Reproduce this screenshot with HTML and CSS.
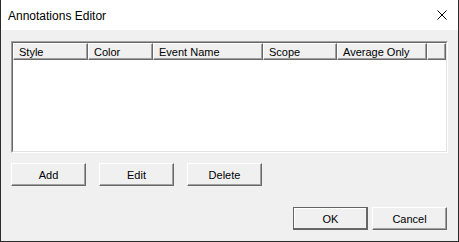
FILE: index.html
```html
<!DOCTYPE html>
<html lang="en">
<head>
    <meta charset="UTF-8">
    <title>Annotations Editor</title>
    <link rel="stylesheet" href="styles.css">
</head>
<body>

    <div class="window">
        <div class="titlebar">
            <span class="title">Annotations Editor</span>
            <svg class="close" width="10" height="10" viewBox="0 0 10 10">
                <path d="M0.5 0.5 L9.5 9.5 M9.5 0.5 L0.5 9.5" stroke="#000" stroke-width="1" fill="none"/>
            </svg>
        </div>

        <div class="client">
            <div class="listview">
                <div class="list-inner">
                    <div class="header">
                        <div class="col col-style">Style</div>
                        <div class="col col-color">Color</div>
                        <div class="col col-event">Event Name</div>
                        <div class="col col-scope">Scope</div>
                        <div class="col col-avg">Average Only</div>
                        <div class="col col-rest"></div>
                    </div>
                </div>
            </div>

            <div class="btn-row">
                <button class="btn">Add</button>
                <button class="btn">Edit</button>
                <button class="btn">Delete</button>
            </div>

            <div class="btn-row dialog-row">
                <button class="btn default">OK</button>
                <button class="btn">Cancel</button>
            </div>
        </div>
    </div>

</body>
</html>
```

FILE: styles.css
```css
body {
    margin: 0;
    padding: 0;
    font-family: 'Liberation Sans', Arial, sans-serif;
    font-size: 11px;
    color: #000;
    background-color: #fff;
}

.window {
    width: 459px;
    height: 242px;
    box-sizing: border-box;
    border: 1px solid #2b2b2b;
    border-top: none;
    display: flex;
    flex-direction: column;
}

.titlebar {
    height: 30px;
    background-color: #fff;
    display: flex;
    align-items: center;
    justify-content: space-between;
    padding: 0 11px 0 7px;
    flex-shrink: 0;
}

.title {
    font-size: 12px;
    margin-top: 1px;
}

.close {
    display: block;
    margin-top: -1px;
}

.client {
    flex: 1;
    background-color: #f0f0f0;
    padding: 11px 10px 0 10px;
}

/* sunken list view frame */
.listview {
    height: 112px;
    box-sizing: border-box;
    border: 1px solid;
    border-color: #a0a0a0 #fff #fff #a0a0a0;
}

.list-inner {
    height: 100%;
    box-sizing: border-box;
    border: 1px solid;
    border-color: #696969 #e3e3e3 #e3e3e3 #696969;
    background-color: #fff;
}

.header {
    display: flex;
    height: 17px;
}

.col {
    box-sizing: border-box;
    height: 17px;
    line-height: 16px;
    padding-left: 5px;
    background-color: #f0f0f0;
    border-top: 1px solid #fff;
    border-left: 1px solid #fff;
    border-right: 1px solid #696969;
    border-bottom: 1px solid #696969;
    box-shadow: inset -1px -1px 0 #a0a0a0;
    white-space: nowrap;
}

.col-style { width: 75px; }
.col-color { width: 65px; }
.col-event { width: 110px; }
.col-scope { width: 74px; }
.col-avg { width: 90px; }
.col-rest { flex: 1; }

.btn-row {
    display: flex;
    gap: 13px;
    margin-top: 10px;
}

.dialog-row {
    justify-content: flex-end;
    gap: 4px;
    margin-top: 21px;
    padding-right: 1px;
}

.btn {
    width: 75px;
    height: 23px;
    box-sizing: border-box;
    font-family: 'Liberation Sans', Arial, sans-serif;
    font-size: 11px;
    color: #000;
    background-color: #f0f0f0;
    border: 1px solid;
    border-color: #fff #696969 #696969 #fff;
    box-shadow: inset -1px -1px 0 #a0a0a0;
    padding: 0;
    border-radius: 0;
}

.btn.default {
    outline: 1px solid #646464;
    outline-offset: -1px;
    border-color: #fff #a0a0a0 #a0a0a0 #fff;
    box-shadow: inset -1px -1px 0 #696969, inset 1px 1px 0 #fff;
}
```
